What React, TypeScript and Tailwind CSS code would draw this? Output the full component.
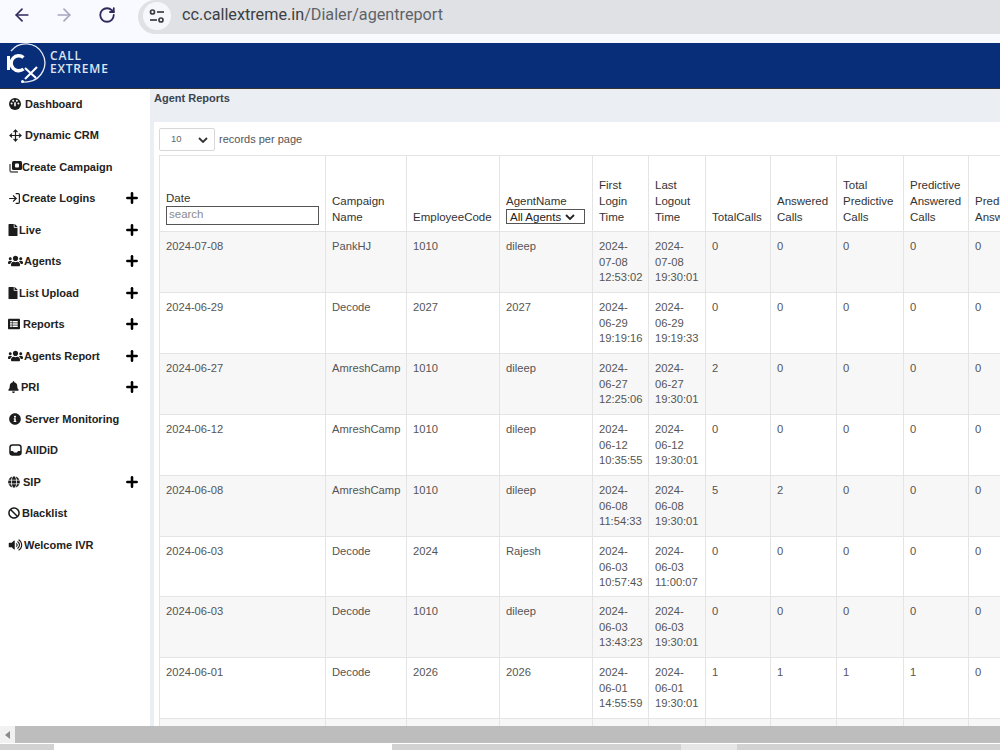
import React from "react";
import { ArrowLeft, ArrowRight, RotateCw, Plus, LogIn, Move } from "lucide-react";
import { FaFile, FaUsers, FaListAlt, FaBell, FaInfoCircle, FaGlobe, FaBan, FaVolumeUp } from "react-icons/fa";

type Item = { label: string; icon: React.ReactNode; plus?: boolean; gap: string };

const ic = "w-[12px] h-[12px] text-[#1c1c1c] shrink-0";

const GaugeIcon = () => (
  <svg viewBox="0 0 12 12" className={ic}>
    <circle cx="6" cy="6" r="6" fill="#1c1c1c" />
    <circle cx="2.6" cy="5.4" r="1" fill="#fff" />
    <circle cx="4.2" cy="2.8" r="1" fill="#fff" />
    <circle cx="7.8" cy="2.8" r="1" fill="#fff" />
    <circle cx="9.4" cy="5.4" r="1" fill="#fff" />
    <path d="M6 4.2v4" stroke="#fff" strokeWidth="1.6" />
  </svg>
);

const CampaignIcon = () => (
  <svg viewBox="0 0 13 13" className="w-[13px] h-[13px] shrink-0">
    <path d="M1 4v6.5A1.5 1.5 0 0 0 2.5 12H9" fill="none" stroke="#555" strokeWidth="1.4" />
    <rect x="3" y="1" width="10" height="9" rx="1.5" fill="#1c1c1c" />
    <rect x="6" y="3.5" width="4" height="4" rx="1" fill="#fff" />
  </svg>
);

const TrayIcon = () => (
  <svg viewBox="0 0 13 12" className="w-[13px] h-[12px] shrink-0">
    <rect x="1" y="1" width="11" height="10" rx="2.4" fill="none" stroke="#1c1c1c" strokeWidth="1.5" />
    <path d="M1 7h3l1 1.5h3L9 7h3v2.5A1.5 1.5 0 0 1 10.5 11h-8A1.5 1.5 0 0 1 1 9.5z" fill="#1c1c1c" />
  </svg>
);

const users = "w-[15px] h-[12px] text-[#1c1c1c] shrink-0";
const file = "w-[10px] h-[12px] text-[#1c1c1c] shrink-0";

const items: Item[] = [
  { label: "Dashboard", icon: <GaugeIcon />, gap: "pl-[9px] gap-[4px]" },
  { label: "Dynamic CRM", icon: <Move className="w-[13px] h-[13px] text-[#1c1c1c] shrink-0" strokeWidth={2.2} />, gap: "pl-[9px] gap-[3px]" },
  { label: "Create Campaign", icon: <CampaignIcon />, gap: "pl-[9px] gap-0" },
  { label: "Create Logins", icon: <LogIn className="w-[13px] h-[13px] text-[#1c1c1c] shrink-0" strokeWidth={2.2} />, plus: true, gap: "pl-[8px] gap-[1px]" },
  { label: "Live", icon: <FaFile className={file} />, plus: true, gap: "pl-[8px] gap-[1px]" },
  { label: "Agents", icon: <FaUsers className={users} />, plus: true, gap: "pl-[8px] gap-[1px]" },
  { label: "List Upload", icon: <FaFile className={file} />, plus: true, gap: "pl-[8px] gap-[1px]" },
  { label: "Reports", icon: <FaListAlt className={ic} />, plus: true, gap: "pl-[8px] gap-[3px]" },
  { label: "Agents Report", icon: <FaUsers className={users} />, plus: true, gap: "pl-[8px] gap-[1px]" },
  { label: "PRI", icon: <FaBell className="w-[11px] h-[12px] text-[#1c1c1c] shrink-0" />, plus: true, gap: "pl-[8px] gap-[2px]" },
  { label: "Server Monitoring", icon: <FaInfoCircle className={ic} />, gap: "pl-[9px] gap-[4px]" },
  { label: "AllDiD", icon: <TrayIcon />, gap: "pl-[9px] gap-[3px]" },
  { label: "SIP", icon: <FaGlobe className={ic} />, plus: true, gap: "pl-[8px] gap-[3px]" },
  { label: "Blacklist", icon: <FaBan className={ic} />, gap: "pl-[8px] gap-[2px]" },
  { label: "Welcome IVR", icon: <FaVolumeUp className="w-[15px] h-[12px] text-[#1c1c1c] shrink-0" />, gap: "pl-[8px] gap-[1px]" },
];

const rows = [
  ["2024-07-08", "PankHJ", "1010", "dileep", "2024-07-08", "12:53:02", "2024-07-08", "19:30:01", "0", "0", "0", "0", "0"],
  ["2024-06-29", "Decode", "2027", "2027", "2024-06-29", "19:19:16", "2024-06-29", "19:19:33", "0", "0", "0", "0", "0"],
  ["2024-06-27", "AmreshCamp", "1010", "dileep", "2024-06-27", "12:25:06", "2024-06-27", "19:30:01", "2", "0", "0", "0", "0"],
  ["2024-06-12", "AmreshCamp", "1010", "dileep", "2024-06-12", "10:35:55", "2024-06-12", "19:30:01", "0", "0", "0", "0", "0"],
  ["2024-06-08", "AmreshCamp", "1010", "dileep", "2024-06-08", "11:54:33", "2024-06-08", "19:30:01", "5", "2", "0", "0", "0"],
  ["2024-06-03", "Decode", "2024", "Rajesh", "2024-06-03", "10:57:43", "2024-06-03", "11:00:07", "0", "0", "0", "0", "0"],
  ["2024-06-03", "Decode", "1010", "dileep", "2024-06-03", "13:43:23", "2024-06-03", "19:30:01", "0", "0", "0", "0", "0"],
  ["2024-06-01", "Decode", "2026", "2026", "2024-06-01", "14:55:59", "2024-06-01", "19:30:01", "1", "1", "1", "1", "0"],
];

const th = "border border-[#e4e4e4] pl-[6px] pr-[4px] pb-[6px] align-bottom text-left font-normal text-[11.5px] leading-[16px] text-[#333]";
const td = "border border-[#e4e4e4] pl-[6px] pr-[2px] pt-[7px] align-top text-[11.2px] leading-[15.6px] text-[#555] overflow-hidden";

function DateCell({ d, t }: { d: string; t: string }) {
  return (
    <td className={td}>
      {d.slice(0, 5)}
      <br />
      {d.slice(5)}
      <br />
      {t}
    </td>
  );
}

export default function App() {
  return (
    <div className="h-[750px] w-[1000px] overflow-hidden flex flex-col bg-white font-['Liberation_Sans',Arial,sans-serif] text-[11px]">
      {/* Browser bar */}
      <div className="h-[43px] shrink-0 bg-[#f8faff] flex items-start pl-[12px]">
        <ArrowLeft className="w-[20px] h-[20px] mt-[5px] text-[#2e2a5c]" strokeWidth={2} />
        <ArrowRight className="w-[20px] h-[20px] mt-[5px] ml-[22px] text-[#a7a6bd]" strokeWidth={2} />
        <RotateCw className="w-[18px] h-[18px] mt-[6px] ml-[24px] text-[#2e2a5c]" strokeWidth={2.4} />
        <div className="ml-[22px] flex-1 h-[34px] bg-[#dfe1e5] rounded-l-[17px] flex items-start pl-[5px]">
          <div className="w-[28px] h-[28px] mt-[2px] rounded-full bg-[#f6f7fa] flex items-center justify-center">
            <svg width="16" height="14" viewBox="0 0 16 14" fill="none" stroke="#3d3d45" strokeWidth="1.7">
              <circle cx="3.5" cy="3" r="2" />
              <path d="M8 3h7" />
              <path d="M1 11h7" />
              <circle cx="12" cy="11" r="2" />
            </svg>
          </div>
          <div className="ml-[11px] mt-[3px] text-[16.2px] leading-[24px] font-['Roboto',sans-serif] text-[#5f6368]">
            <span className="text-[#3c4043]">cc.callextreme.in</span>/Dialer/agentreport
          </div>
        </div>
      </div>

      {/* Header */}
      <div className="h-[46px] shrink-0 bg-[#082e79] border-b border-[#333] flex items-start pl-[5px]">
        <svg width="42" height="42" viewBox="0 0 42 42" fill="none" className="shrink-0">
          <path d="M6 8 A19 19 0 1 1 24 38.6" stroke="#e8edf5" strokeWidth="1.3" />
          <path d="M24 38.6 Q20 39.5 17 38.6" stroke="#e8edf5" strokeWidth="1.3" />
          <circle cx="17.5" cy="38.6" r="1.5" fill="#fff" />
          <path d="M3.5 13v14" stroke="#fff" strokeWidth="3" />
          <path d="M18.5 14.5 A7.5 7.5 0 1 0 18.5 26" stroke="#fff" strokeWidth="3.4" />
          <path d="M20 25l11 10M32 24l-12 12" stroke="#fff" strokeWidth="2.1" />
        </svg>
        <div className="ml-[3px] mt-[6px] text-[12px] leading-[13px] font-semibold tracking-[0.8px] font-['Open_Sans',sans-serif] text-[#dfe5f0]">
          CALL
          <br />
          EXTREME
        </div>
      </div>

      <div className="flex-1 min-h-0 flex">
        {/* Sidebar */}
        <nav className="w-[150px] shrink-0 bg-white">
          <div className="-mt-[1px]">
            {items.map((it) => (
              <div key={it.label} className={`h-[31.5px] flex items-center pr-[10px] font-semibold text-[#222] ${it.gap}`}>
                {it.icon}
                <span className="whitespace-nowrap">{it.label}</span>
                {it.plus && <Plus className="ml-auto w-[16px] h-[16px] text-black" strokeWidth={3.8} />}
              </div>
            ))}
          </div>
        </nav>

        {/* Main */}
        <main className="flex-1 min-w-0 bg-[#ebeef3] pl-[4px] overflow-hidden">
          <div className="h-[33px] pt-[2px] font-bold text-[#3a4450] text-[11px] leading-[14px]">Agent Reports</div>
          <div className="bg-white h-full pl-[5px] pt-[6px]">
            <div className="flex items-center h-[23px] mb-[4px]">
              <div className="w-[56px] h-[23px] border border-[#d8d8d8] rounded-[2px] flex items-center justify-between pl-[11px] pr-[6px] text-[9.5px] text-[#666]">
                10
                <svg width="10" height="6" viewBox="0 0 10 6" fill="none" stroke="#333" strokeWidth="1.8">
                  <path d="M1 1l4 4 4-4" />
                </svg>
              </div>
              <span className="ml-[4px] text-[#555]">records per page</span>
            </div>
            <table className="table-fixed border-collapse w-[900px]">
              <colgroup>
                <col className="w-[166px]" />
                <col className="w-[81px]" />
                <col className="w-[93px]" />
                <col className="w-[93px]" />
                <col className="w-[56px]" />
                <col className="w-[57px]" />
                <col className="w-[65px]" />
                <col className="w-[66px]" />
                <col className="w-[67px]" />
                <col className="w-[65px]" />
                <col className="w-[91px]" />
              </colgroup>
              <thead>
                <tr className="h-[76px]">
                  <th className={`${th} pb-[5px]`}>
                    Date
                    <div className="w-[153px] h-[19px] border border-[#555] px-[2px] text-[#8a8a8a] leading-[15px]">search</div>
                  </th>
                  <th className={th}>Campaign<br />Name</th>
                  <th className={th}>EmployeeCode</th>
                  <th className={`${th} pb-[7px]`}>
                    AgentName
                    <div className="w-[79px] h-[15px] border border-[#555] pl-[3px] flex items-center text-[#222] leading-[12px] whitespace-nowrap">
                      All Agents
                      <svg width="10" height="6" viewBox="0 0 10 6" fill="none" stroke="#222" strokeWidth="1.8" className="ml-[4px]">
                        <path d="M1 1l4 4 4-4" />
                      </svg>
                    </div>
                  </th>
                  <th className={th}>First<br />Login<br />Time</th>
                  <th className={th}>Last<br />Logout<br />Time</th>
                  <th className={th}>TotalCalls</th>
                  <th className={th}>Answered<br />Calls</th>
                  <th className={th}>Total<br />Predictive<br />Calls</th>
                  <th className={th}>Predictive<br />Answered<br />Calls</th>
                  <th className={`${th} whitespace-nowrap`}>Predictive<br />Answered</th>
                </tr>
              </thead>
              <tbody>
                {rows.map((r, i) => (
                  <tr key={i} className={`${i === 5 ? "h-[60px]" : "h-[61px]"} ${i % 2 === 0 ? "bg-[#f7f7f7]" : "bg-white"}`}>
                    <td className={td}>{r[0]}</td>
                    <td className={td}>{r[1]}</td>
                    <td className={td}>{r[2]}</td>
                    <td className={td}>{r[3]}</td>
                    <DateCell d={r[4]} t={r[5]} />
                    <DateCell d={r[6]} t={r[7]} />
                    <td className={td}>{r[8]}</td>
                    <td className={td}>{r[9]}</td>
                    <td className={td}>{r[10]}</td>
                    <td className={td}>{r[11]}</td>
                    <td className={td}>{r[12]}</td>
                  </tr>
                ))}
                <tr className="h-[30px] bg-[#f7f7f7]">
                  {Array.from({ length: 11 }).map((_, i) => (
                    <td key={i} className={td} />
                  ))}
                </tr>
              </tbody>
            </table>
          </div>
        </main>
      </div>

      {/* Scrollbar */}
      <div className="h-[17px] shrink-0 bg-[#f1f1f1] flex items-center">
        <div className="w-[15px] flex justify-center">
          <svg width="5" height="8" viewBox="0 0 5 8"><path d="M5 0v8L0 4z" fill="#8a8a8a" /></svg>
        </div>
        <div className="flex-1 h-full bg-[#bdbdbd]" />
      </div>
      {/* Taskbar strip */}
      <div className="h-[6px] mt-[1px] shrink-0 bg-[#d2d2d2] flex">
        <div className="ml-[54px] w-[338px] bg-white" />
        <div className="ml-[289px] w-[56px] bg-[#e6e6e6]" />
      </div>
    </div>
  );
}
